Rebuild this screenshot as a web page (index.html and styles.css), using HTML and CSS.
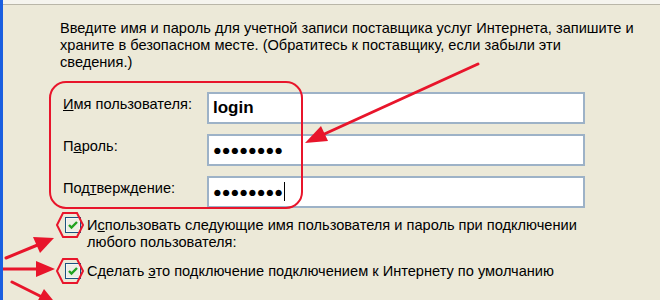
FILE: index.html
```html
<!DOCTYPE html>
<html lang="ru">
<head>
  <meta charset="UTF-8">
  <meta name="viewport" content="width=device-width, initial-scale=1.0">
  <title>Учетная запись Интернета</title>
  <link rel="stylesheet" href="styles.css">
</head>
<body>
  <div class="window">
    <div class="edge"></div>
    <div class="content">
      <p class="hint">Введите имя и пароль для учетной записи поставщика услуг Интернета, запишите и<br>храните в безопасном месте. (Обратитесь к поставщику, если забыли эти<br>сведения.)</p>

      <div class="fields">
        <label class="label"><u>И</u>мя пользователя:</label>
        <div class="field">login</div>
        <label class="label">П<u>а</u>роль:</label>
        <div class="field dots">●●●●●●●●</div>
        <label class="label">Под<u>т</u>верждение:</label>
        <div class="field dots">●●●●●●●●<span class="caret"></span></div>
      </div>

      <div class="options">
        <div class="option">
          <span class="check">
            <svg width="16" height="16" viewBox="0 0 16 16">
              <rect x="0.5" y="0.5" width="15" height="15" fill="#fff" stroke="#1c5180"/>
              <rect x="1.5" y="1.5" width="13" height="13" fill="#eeeee6"/>
              <path d="M4 8 L6.5 10.5 L12 5" fill="none" stroke="#21a121" stroke-width="2.4"/>
            </svg>
          </span>
          <span>И<u>с</u>пользовать следующие имя пользователя и пароль при подключении<br>любого пользователя:</span>
        </div>
        <div class="option">
          <span class="check">
            <svg width="16" height="16" viewBox="0 0 16 16">
              <rect x="0.5" y="0.5" width="15" height="15" fill="#fff" stroke="#1c5180"/>
              <rect x="1.5" y="1.5" width="13" height="13" fill="#eeeee6"/>
              <path d="M4 8 L6.5 10.5 L12 5" fill="none" stroke="#21a121" stroke-width="2.4"/>
            </svg>
          </span>
          <span>Сделать <u>э</u>то подключение подключением к Интернету по умолчанию</span>
        </div>
      </div>
    </div>

    <!-- red marks drawn over the dialog -->
    <svg class="marks" width="660" height="300" viewBox="0 0 660 300">
      <g fill="none" stroke="#e8152b" stroke-width="2">
        <rect x="50" y="82" width="252" height="126" rx="16"/>
        <polygon points="57,225 63,213 77,213 83,225 77,237 63,237"/>
        <polygon points="57,271 63,259 77,259 83,271 77,283 63,283"/>
      </g>
      <g stroke="#e8152b" stroke-width="3" stroke-linecap="round">
        <line x1="478" y1="64" x2="320" y2="136"/>
        <line x1="6" y1="258" x2="40" y2="244"/>
        <line x1="3" y1="269" x2="40" y2="269"/>
        <line x1="12" y1="282" x2="44" y2="298"/>
      </g>
      <g fill="#e8152b">
        <polygon points="305,143 328,141 321,126"/>
        <polygon points="54,238 40,253 33,237"/>
        <polygon points="55,269 36,261 36,277"/>
        <polygon points="57,305 36,304 44,289"/>
      </g>
    </svg>
  </div>
</body>
</html>
```

FILE: styles.css
```css
body {
  margin: 0;
  font-family: "Liberation Sans", Arial, sans-serif;
  font-size: 14.6px;
  color: #000;
}

.window {
  position: relative;
  width: 660px;
  height: 300px;
  overflow: hidden;
  background: #ece9d8;
  border-left: 3px solid #1a5fe0;
  box-sizing: border-box;
}

.edge {
  height: 4px;
  background: #f5f4ee;
  border-bottom: 1px solid #b9b6a8;
}

.content {
  padding: 15px 0 0 57px;
}

.hint {
  margin: 0;
  line-height: 17px;
}

.fields {
  display: grid;
  grid-template-columns: 144px 378px;
  grid-auto-rows: 32px;
  row-gap: 10px;
  margin-top: 21px;
  margin-left: 3px;
}

.label {
  padding-top: 4px;
}

.field {
  box-sizing: border-box;
  border: 2px solid #9db2c7;
  background: #fff;
  padding: 0 4px;
  font-weight: bold;
  font-size: 17px;
  line-height: 28px;
}

.dots {
  font-size: 14.5px;
}

.caret {
  display: inline-block;
  width: 1px;
  height: 19px;
  margin-left: 1px;
  background: #000;
  vertical-align: -4px;
}

.options {
  margin-top: 9px;
  margin-left: 5px;
}

.option {
  display: flex;
  gap: 6px;
  line-height: 17px;
  margin-bottom: 12px;
}

.check {
  flex: none;
  width: 16px;
  height: 16px;
}

.marks {
  position: absolute;
  left: -3px;
  top: 0;
}
```
